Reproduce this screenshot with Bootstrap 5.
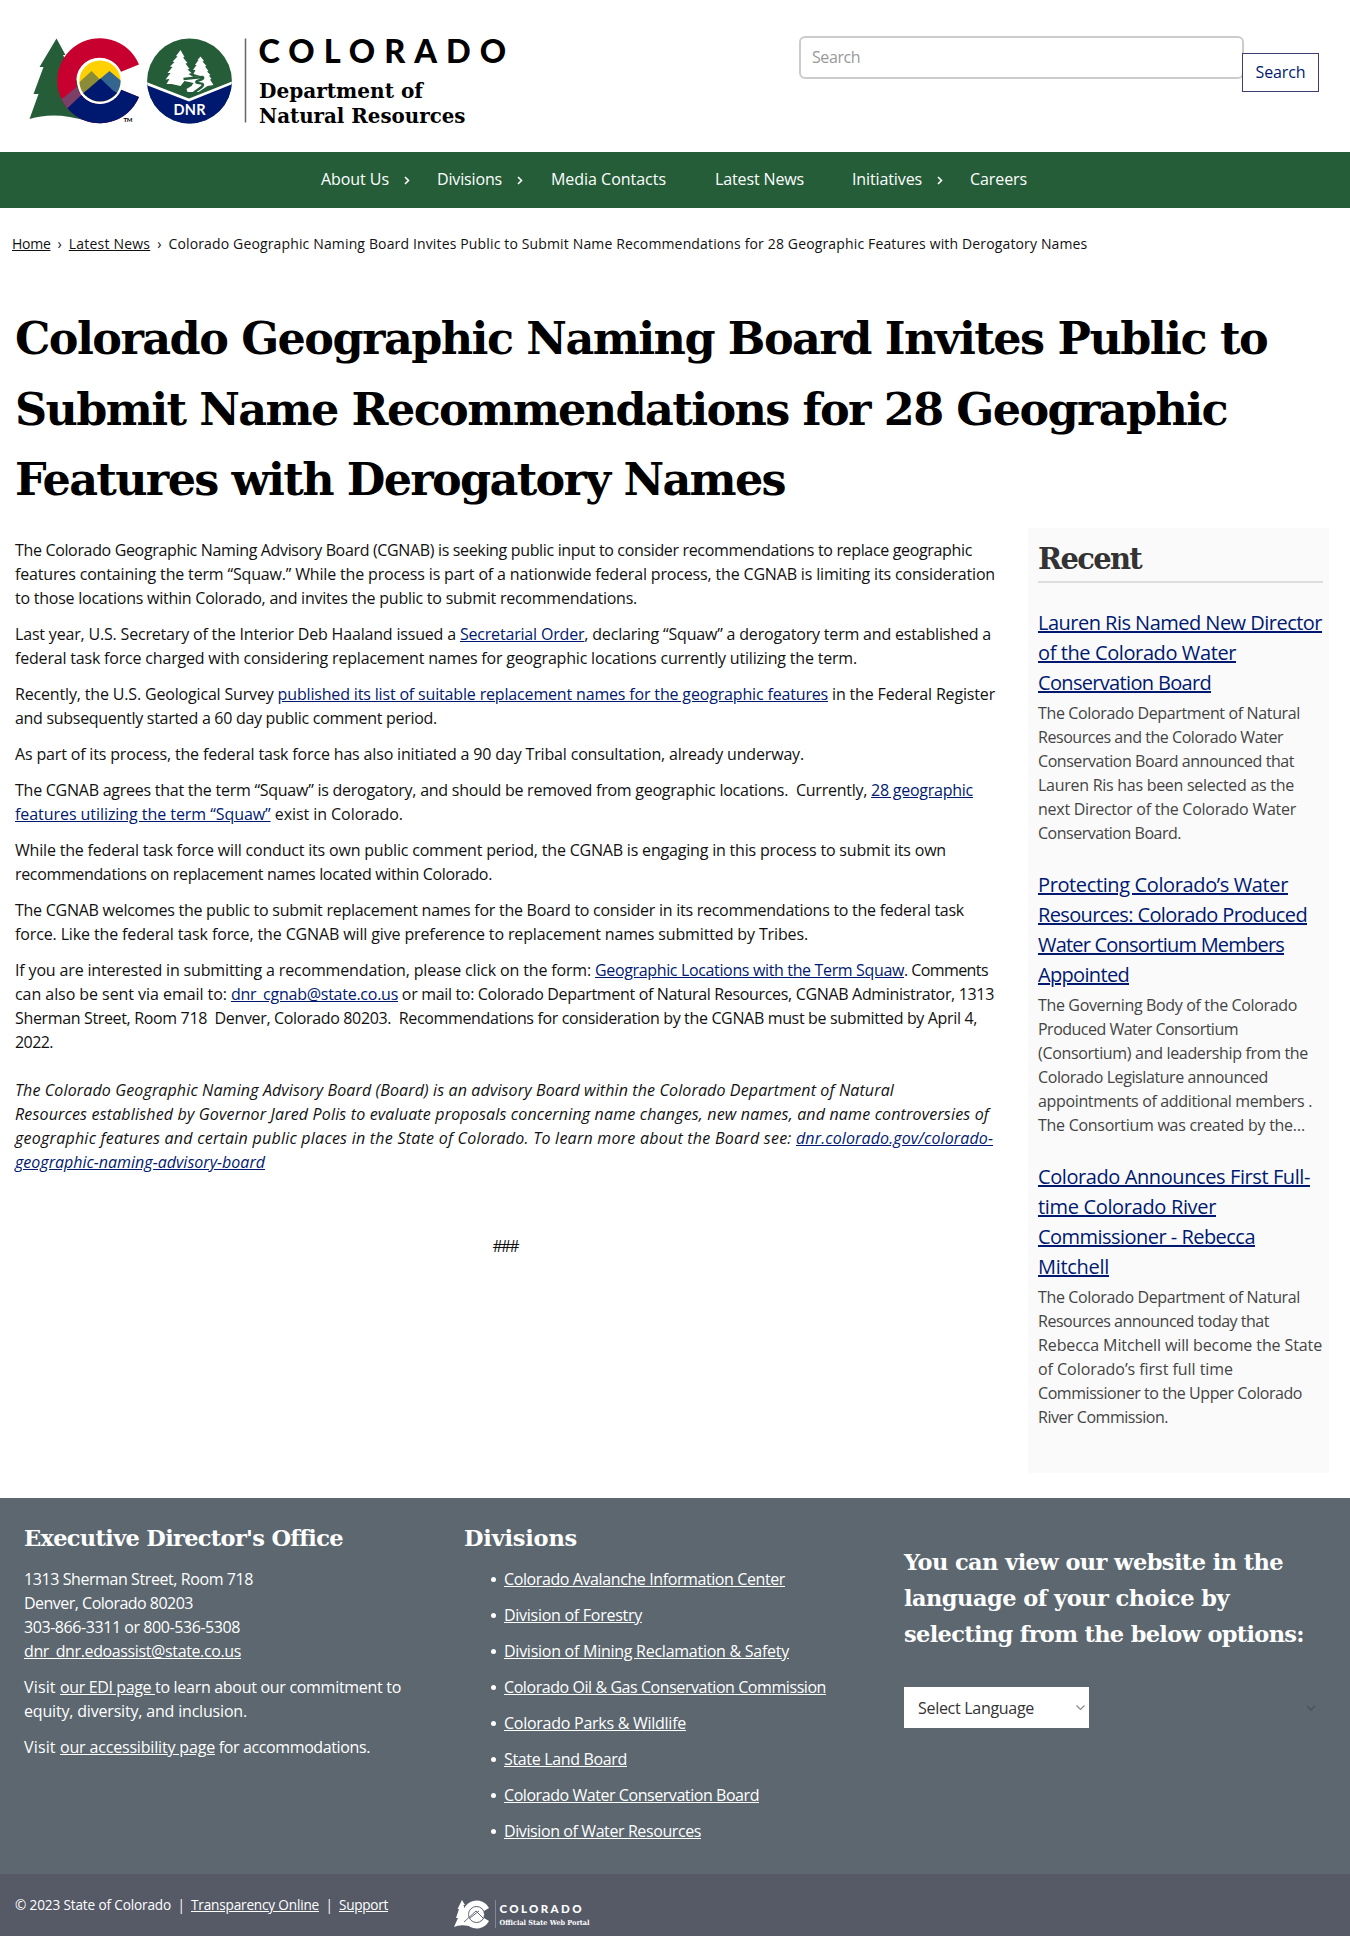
<!DOCTYPE html>
<html lang="en">
<head>
<meta charset="utf-8">
<meta name="viewport" content="width=device-width, initial-scale=1">
<title>Colorado Geographic Naming Board Invites Public to Submit Name Recommendations</title>
<link rel="stylesheet" href="https://cdn.jsdelivr.net/npm/bootstrap@5.3.0/dist/css/bootstrap.min.css">
<style>
body{font-family:"Open Sans","Noto Sans",sans-serif;font-size:16px;line-height:24px;color:#111;background:#fff;width:1350px;overflow-x:hidden}
p{margin:0 0 12px}
a{color:#001970}
.fit{display:inline-block;white-space:pre}
.fit-row{display:block;white-space:pre}
.slab{font-family:"DejaVu Serif",serif;font-weight:700}
.site-head{height:152px}
.logo-box{padding-left:23px}
.search-area{padding:36px 30px 0 0}
.search-field{width:445px;height:43px;border:2px solid #ccc;border-radius:6px;padding:0 11px 2px;font-size:16px}
.search-field::placeholder{color:#999;opacity:1;letter-spacing:-.4px}
.search-btn{height:39px;width:77px;margin:17px 1px 0 -2px;border:1px solid #3c3d70;border-radius:0;background:#fff;color:#001970;padding:5px 0 7px;font-size:16px;line-height:24px}
.main-nav{background:#245d38;height:56px;padding:0 0 2px 321px}
.main-nav .nav-link{color:#fff;padding:0;line-height:24px;display:flex}
.nav-caret{width:6px;margin-left:15px}
.crumbs{padding:24px 0 0 12px;height:95px;font-size:14px;line-height:24px;color:#111}
.crumbs a{color:#111}
.crumb-sep{padding:0 7px}
.page-title{font-size:44.5px;line-height:70.6px;margin:0;padding-left:15px;height:225px;color:#000}
.story{width:1028px;padding:10px 0 0 15px}
.marks{width:980px;padding-top:48px}
.recent{width:301px;height:945px;background:#fafafa;padding:12px 6px 0 10px;color:#444}
.recent-title{font-size:29px;line-height:38px;color:#333;margin:0 0 25px;border-bottom:2px solid #ddd;height:43px}
.recent-link{display:block;font-size:20px;line-height:30px;margin-bottom:3px}
.recent-link .fit{text-decoration:underline}
.recent-text{margin-bottom:25px}
.foot-main{background:#5c6770;height:376px;margin-top:25px;color:#fff;padding:22px 0 0 24px}
.foot-main a,.foot-base a{color:#fff}
.foot-title{font-size:22.5px;line-height:36px;margin:0 0 11px;height:36px}
.foot-col{width:440px}
.div-list{list-style:none;padding-left:29px;margin:0}
.div-list li{margin-bottom:12px;display:flex;align-items:center}
.div-list li::before{content:"";width:5px;height:5px;border-radius:50%;background:#fff;margin:1px 6px 0 -2px}
.div-list li .fit{margin-left:2px}
.lang-title{font-size:22.5px;line-height:36px;margin:24px 0 35px;height:108px}
.lang-select{width:185px;height:41px;background:#fff;color:#333;padding:0 3px 0 14px}
.ghost-caret{margin-right:34px}
.foot-base{background:#565a67;height:62px;color:#fff;font-size:13.6px;padding-left:15px}
.base-text{width:439px;padding-top:19px}
</style>
<script src="https://cdn.jsdelivr.net/npm/bootstrap@5.3.0/dist/js/bootstrap.bundle.min.js"></script>
</head>
<body>
<header class="site-head d-flex justify-content-between align-items-start">
  <div class="logo-box">
    <svg class="d-block" width="500" height="140" viewBox="23.500 0 500 140" role="img" aria-label="Colorado Department of Natural Resources">
      <path fill="#245d38" d="M57 38.500 66 55 63.500 55 77 80 88 121 Q55 111 30 119 L39 94 34 94 44 67 40 67Z"/>
      <clipPath id="cshape"><path d="M139.500 64.500A42.500 42.500 0 1 0 139.500 97L121 89.500A23 23 0 1 1 121 72Z"/></clipPath>
      <g clip-path="url(#cshape)">
        <rect x="56" y="37" width="90" height="90" fill="#c8002f"/>
        <path fill="#7b3f68" d="M56 104 82 83 90 92 66 114Z"/>
        <path fill="#001970" d="M66 110 102 76 146 94V127H66Z"/>
      </g>
      <circle cx="100.500" cy="81" r="23" fill="#fff"/>
      <clipPath id="disc"><circle cx="100.500" cy="81" r="20.600"/></clipPath>
      <g clip-path="url(#disc)">
        <rect x="79" y="60" width="44" height="44" fill="#ffd100"/>
        <path fill="#8b8b38" d="M78 84 92 71 104 83 80 100Z"/>
        <path fill="#33658f" d="M98 81 110 71 124 83V100H115Z"/>
        <path fill="#001970" d="M78 98 101 78.500 114 91 124 96V105H78Z"/>
      </g>
      <text x="124" y="122" font-family="Lato" font-weight="700" font-size="6" textLength="9">TM</text>
      <clipPath id="seal"><circle cx="190" cy="81" r="42.400"/></clipPath>
      <g clip-path="url(#seal)">
        <rect x="147" y="38" width="86" height="87" fill="#245d38"/>
        <path fill="#001970" d="M147 84 189.500 100.500 233 83V125H147Z"/>
        <path fill="none" stroke="#fff" stroke-width="2.700" d="M147 83.500 189.500 100 233 82.700"/>
      </g>
      <path fill="#fff" d="M181 50 185 57 183.500 57.500 188 63 186 63.500 190 69 188 69.500 192 73 189 74 194 77 201 76 194 74 196 70 193.500 70 197 65 195.500 65 199 60 198 60 201 56.500 204.500 61 203 61.500 207 66 205.500 66.500 209 71 207.500 71.500 211 75 209.500 75.500 212 79 210.500 79.500 214 85 208 86 199 92 188 92 187 89 192 86 194 83 185 81 181 86 172 84 167 84 170 79 166 79.500 171 73 168 73 173 67 170.500 66.500 175 62 173 61.500 178 56.500 176.500 56Z"/>
      <path fill="none" stroke="#245d38" stroke-width="2.400" d="M184 79Q193 78 203 77C206 79 199 80 197 81.500 195 84 206 82 203 86 201 89 196 90 193 94"/>
      <text x="174" y="115.300" fill="#fff" font-family="Lato" font-weight="700" font-size="14.500" textLength="32">DNR</text>
      <path stroke="#666" stroke-width="1.500" d="M246 38.500V122.500"/>
      <text x="259" y="62.500" font-family="Lato" font-weight="900" font-size="32.500" textLength="247.500">COLORADO</text>
      <g class="slab" font-size="20.500">
        <text x="259.500" y="98" textLength="164" lengthAdjust="spacingAndGlyphs">Department of</text>
        <text x="259.500" y="122.500" textLength="206.500" lengthAdjust="spacingAndGlyphs">Natural Resources</text>
      </g>
    </svg>
  </div>
  <form class="search-area d-flex align-items-start">
    <input class="search-field" type="text" placeholder="Search" aria-label="Search">
    <button class="btn search-btn" type="button"><span class="fit" data-w="50">Search</span></button>
  </form>
</header>

<nav class="main-nav d-flex align-items-center">
  <a class="nav-link" href="#" style="width:116px"><span class="fit" data-w="68">About Us</span><svg class="nav-caret" viewBox="0 0 6 24"><path d="M1 10l3.500 3.500L1 17" fill="none" stroke="#fff" stroke-width="1.600"/></svg></a>
  <a class="nav-link" href="#" style="width:114px"><span class="fit" data-w="65">Divisions</span><svg class="nav-caret" viewBox="0 0 6 24"><path d="M1 10l3.500 3.500L1 17" fill="none" stroke="#fff" stroke-width="1.600"/></svg></a>
  <a class="nav-link" href="#" style="width:164px"><span class="fit" data-w="115">Media Contacts</span></a>
  <a class="nav-link" href="#" style="width:137px"><span class="fit" data-w="89">Latest News</span></a>
  <a class="nav-link" href="#" style="width:118px"><span class="fit" data-w="70">Initiatives</span><svg class="nav-caret" viewBox="0 0 6 24"><path d="M1 10l3.500 3.500L1 17" fill="none" stroke="#fff" stroke-width="1.600"/></svg></a>
  <a class="nav-link" href="#"><span class="fit" data-w="57">Careers</span></a>
</nav>

<main>
  <div class="crumbs d-flex"><a class="fit" data-w="38.5" href="#">Home</a><span class="crumb-sep">›</span><a class="fit" data-w="81.5" href="#">Latest News</a><span class="crumb-sep">›</span><span class="fit" data-w="919">Colorado Geographic Naming Board Invites Public to Submit Name Recommendations for 28 Geographic Features with Derogatory Names</span></div>
  <h1 class="page-title slab"><span class="fit-row"><span class="fit" data-w="1252">Colorado Geographic Naming Board Invites Public to</span></span><span class="fit-row"><span class="fit" data-w="1212">Submit Name Recommendations for 28 Geographic</span></span><span class="fit-row"><span class="fit" data-w="770">Features with Derogatory Names</span></span></h1>
  <div class="d-flex align-items-start">
    <article class="story">
      <p><span class="fit" data-w="957">The Colorado Geographic Naming Advisory Board (CGNAB) is seeking public input to consider recommendations to replace geographic</span><br><span class="fit" data-w="980">features containing the term “Squaw.” While the process is part of a nationwide federal process, the CGNAB is limiting its consideration</span><br><span class="fit" data-w="622">to those locations within Colorado, and invites the public to submit recommendations.</span></p>
      <p><span class="fit" data-w="976">Last year, U.S. Secretary of the Interior Deb Haaland issued a <a href="#">Secretarial Order</a>, declaring “Squaw” a derogatory term and established a</span><br><span class="fit" data-w="842">federal task force charged with considering replacement names for geographic locations currently utilizing the term.</span></p>
      <p><span class="fit" data-w="980">Recently, the U.S. Geological Survey <a href="#">published its list of suitable replacement names for the geographic features</a> in the Federal Register</span><br><span class="fit" data-w="422">and subsequently started a 60 day public comment period.</span></p>
      <p><span class="fit" data-w="789">As part of its process, the federal task force has also initiated a 90 day Tribal consultation, already underway.</span></p>
      <p><span class="fit" data-w="958">The CGNAB agrees that the term “Squaw” is derogatory, and should be removed from geographic locations.&nbsp; Currently, <a href="#">28 geographic</a></span><br><span class="fit" data-w="388"><a href="#">features utilizing the term “Squaw”</a> exist in Colorado.</span></p>
      <p><span class="fit" data-w="931">While the federal task force will conduct its own public comment period, the CGNAB is engaging in this process to submit its own</span><br><span class="fit" data-w="477">recommendations on replacement names located within Colorado.</span></p>
      <p><span class="fit" data-w="949">The CGNAB welcomes the public to submit replacement names for the Board to consider in its recommendations to the federal task</span><br><span class="fit" data-w="793">force. Like the federal task force, the CGNAB will give preference to replacement names submitted by Tribes.</span></p>
      <p class="mb-4"><span class="fit" data-w="580">If you are interested in submitting a recommendation, please click on the form: </span><a class="fit" data-w="309" href="#">Geographic Locations with the Term Squaw</a><span class="fit" data-w="84">. Comments</span><br><span class="fit" data-w="216">can also be sent via email to: </span><a class="fit" data-w="167" href="#">dnr_cgnab@state.co.us</a><span class="fit" data-w="596"> or mail to: Colorado Department of Natural Resources, CGNAB Administrator, 1313</span><br><span class="fit" data-w="962">Sherman Street, Room 718&nbsp; Denver, Colorado 80203.&nbsp; Recommendations for consideration by the CGNAB must be submitted by April 4,</span><br><span class="fit" data-w="38">2022.</span></p>
      <p class="fst-italic"><span class="fit" data-w="879">The Colorado Geographic Naming Advisory Board (Board) is an advisory Board within the Colorado Department of Natural</span><br><span class="fit" data-w="974">Resources established by Governor Jared Polis to evaluate proposals concerning name changes, new names, and name controversies of</span><br><span class="fit" data-w="781">geographic features and certain public places in the State of Colorado. To learn more about the Board see: </span><a class="fit" data-w="197" href="#">dnr.colorado.gov/colorado-</a><br><a class="fit" data-w="250" href="#">geographic-naming-advisory-board</a></p>
      <p class="marks text-center"><span class="fit" data-w="25">###</span></p>
    </article>
    <aside class="recent">
      <h2 class="recent-title slab"><span class="fit" data-w="103">Recent</span></h2>
      <a class="recent-link" href="#"><span class="fit" data-w="284">Lauren Ris Named New Director</span><br><span class="fit" data-w="198">of the Colorado Water</span><br><span class="fit" data-w="173">Conservation Board</span></a>
      <p class="recent-text"><span class="fit" data-w="262">The Colorado Department of Natural</span><br><span class="fit" data-w="245">Resources and the Colorado Water</span><br><span class="fit" data-w="256">Conservation Board announced that</span><br><span class="fit" data-w="256">Lauren Ris has been selected as the</span><br><span class="fit" data-w="258">next Director of the Colorado Water</span><br><span class="fit" data-w="143">Conservation Board.</span></p>
      <a class="recent-link" href="#"><span class="fit" data-w="250">Protecting Colorado’s Water</span><br><span class="fit" data-w="269">Resources: Colorado Produced</span><br><span class="fit" data-w="246">Water Consortium Members</span><br><span class="fit" data-w="91">Appointed</span></a>
      <p class="recent-text"><span class="fit" data-w="259">The Governing Body of the Colorado</span><br><span class="fit" data-w="200">Produced Water Consortium</span><br><span class="fit" data-w="270">(Consortium) and leadership from the</span><br><span class="fit" data-w="230">Colorado Legislature announced</span><br><span class="fit" data-w="274">appointments of additional members .</span><br><span class="fit" data-w="267">The Consortium was created by the…</span></p>
      <a class="recent-link" href="#"><span class="fit" data-w="272">Colorado Announces First Full-</span><br><span class="fit" data-w="178">time Colorado River</span><br><span class="fit" data-w="217">Commissioner - Rebecca</span><br><span class="fit" data-w="71">Mitchell</span></a>
      <p class="recent-text"><span class="fit" data-w="262">The Colorado Department of Natural</span><br><span class="fit" data-w="231">Resources announced today that</span><br><span class="fit" data-w="284">Rebecca Mitchell will become the State</span><br><span class="fit" data-w="195">of Colorado’s first full time</span><br><span class="fit" data-w="264">Commissioner to the Upper Colorado</span><br><span class="fit" data-w="130">River Commission.</span></p>
    </aside>
  </div>
</main>

<footer>
  <div class="foot-main d-flex">
    <section class="foot-col">
      <h2 class="foot-title slab"><span class="fit" data-w="318">Executive Director's Office</span></h2>
      <p><span class="fit" data-w="229">1313 Sherman Street, Room 718</span><br><span class="fit" data-w="169">Denver, Colorado 80203</span><br><span class="fit" data-w="216">303-866-3311 or 800-536-5308</span><br><a class="fit" data-w="217" href="#">dnr_dnr.edoassist@state.co.us</a></p>
      <p><span class="fit" data-w="36">Visit </span><a class="fit" data-w="95" href="#">our EDI page </a><span class="fit" data-w="246">to learn about our commitment to</span><br><span class="fit" data-w="223">equity, diversity, and inclusion.</span></p>
      <p><span class="fit" data-w="36">Visit </span><a class="fit" data-w="155" href="#">our accessibility page</a><span class="fit" data-w="155"> for accommodations.</span></p>
    </section>
    <section class="foot-col">
      <h2 class="foot-title slab"><span class="fit" data-w="113">Divisions</span></h2>
      <ul class="div-list">
        <li><a class="fit" data-w="281" href="#">Colorado Avalanche Information Center</a></li>
        <li><a class="fit" data-w="138" href="#">Division of Forestry</a></li>
        <li><a class="fit" data-w="285" href="#">Division of Mining Reclamation &amp; Safety</a></li>
        <li><a class="fit" data-w="322" href="#">Colorado Oil &amp; Gas Conservation Commission</a></li>
        <li><a class="fit" data-w="182" href="#">Colorado Parks &amp; Wildlife</a></li>
        <li><a class="fit" data-w="123" href="#">State Land Board</a></li>
        <li><a class="fit" data-w="255" href="#">Colorado Water Conservation Board</a></li>
        <li><a class="fit" data-w="197" href="#">Division of Water Resources</a></li>
      </ul>
    </section>
    <section class="flex-grow-1">
      <h2 class="lang-title slab"><span class="fit" data-w="379">You can view our website in the</span><br><span class="fit" data-w="325">language of your choice by</span><br><span class="fit" data-w="400">selecting from the below options:</span></h2>
      <div class="d-flex align-items-center justify-content-between">
        <div class="lang-select d-flex align-items-center justify-content-between"><span class="fit" data-w="116">Select Language</span><svg width="11" height="8" viewBox="0 0 11 8"><path d="M1.500 1.500 5.500 5.500 9.500 1.500" fill="none" stroke="#888" stroke-width="1.200"/></svg></div>
        <svg class="ghost-caret" width="10" height="8" viewBox="0 0 10 8"><path d="M1 2 5 6 9 2" fill="none" stroke="#48525c" stroke-width="1.400"/></svg>
      </div>
    </section>
  </div>
  <div class="foot-base d-flex">
    <div class="base-text"><span class="fit" data-w="156">© 2023 State of Colorado</span><span class="fit" data-w="20">&nbsp; | &nbsp;</span><a class="fit" data-w="128" href="#">Transparency Online</a><span class="fit" data-w="20">&nbsp; | &nbsp;</span><a class="fit" data-w="49" href="#">Support</a></div>
    <svg width="140" height="62" viewBox="455 1874 140 62" role="img" aria-label="Colorado Official State Web Portal">
      <path fill="#fff" d="M463 1900 466 1905 464.500 1905 470 1926 Q461 1924 455 1927L459 1918 457 1918 460 1909 458.500 1909Z"/>
      <path fill="#fff" d="M490 1908A14 14 0 1 0 490 1921L485 1918A8 8 0 1 1 485 1911Z"/>
      <circle cx="477.500" cy="1914.500" r="8" fill="#fff" stroke="#565a67" stroke-width=".9"/>
      <path d="M465 1922 477 1911 484 1918M471 1918 480 1911" fill="none" stroke="#565a67" stroke-width=".9"/>
      <path d="M496.500 1900V1928" stroke="#858894"/>
      <text x="500.500" y="1913" fill="#fff" font-family="Lato" font-weight="900" font-size="11.500" textLength="82">COLORADO</text>
      <text class="slab" x="500.500" y="1925" fill="#fff" font-size="7" textLength="90" lengthAdjust="spacingAndGlyphs">Official State Web Portal</text>
    </svg>
  </div>
</footer>
<script>
/* Tracks each typeset line out to its measure (data-w, px). */
document.querySelectorAll('.fit[data-w]').forEach(function (el) {
  var gap = Number(el.dataset.w) - el.getBoundingClientRect().width;
  el.style.letterSpacing = (gap / el.textContent.length) + 'px';
});
</script>
</body>
</html>
